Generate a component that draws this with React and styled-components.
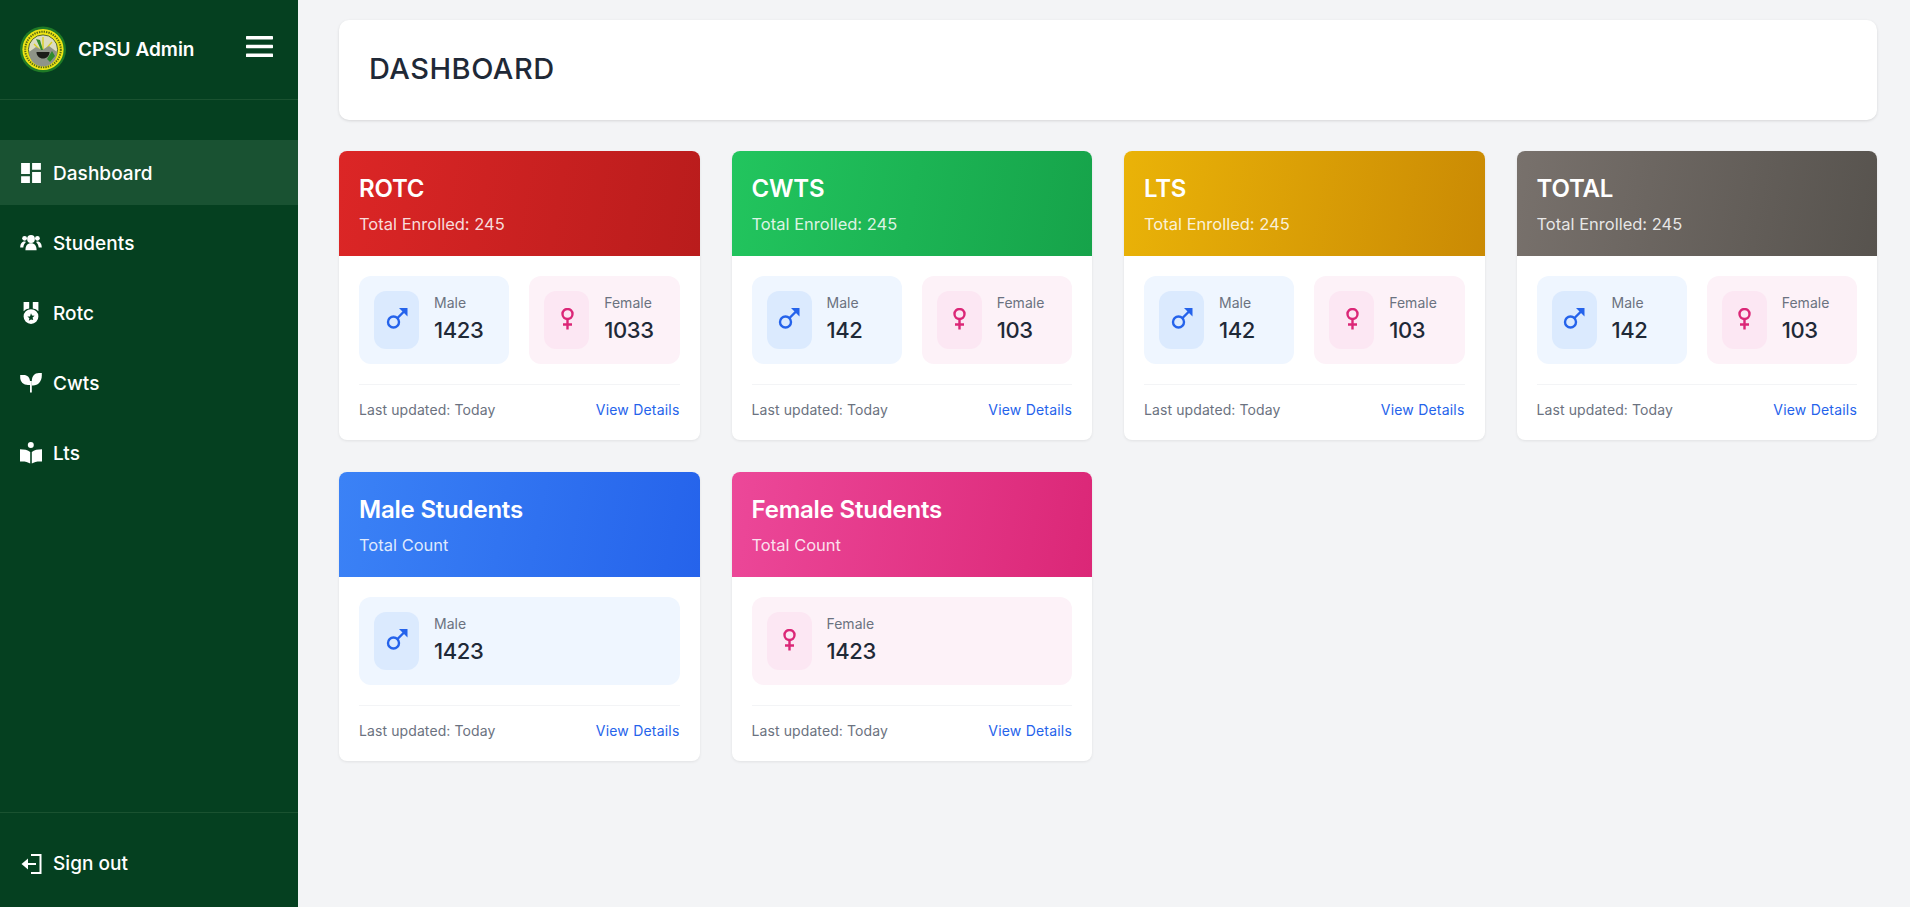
import React from 'react';
import styled, { createGlobalStyle } from 'styled-components';

const Global = createGlobalStyle`
  html, body { margin: 0; padding: 0; height: 100%; }
  body { background: #f3f4f6; font-family: Inter, "Open Sans", sans-serif; }
  * { box-sizing: border-box; }
`;

const Shell = styled.div`
  display: flex;
  height: 907px;
  overflow: hidden;
`;

const Sidebar = styled.aside`
  width: 298px;
  flex: none;
  display: flex;
  flex-direction: column;
  background: #054020;
  color: #fff;
`;

const Brand = styled.div`
  height: 100px;
  border-bottom: 1px solid #1a5230;
  display: flex;
  align-items: center;
  padding: 0 25px 0 20px;
`;

const BrandName = styled.span`
  font-size: 19px;
  font-weight: 600;
  margin-left: 12px;
  flex: 1;
`;

const Nav = styled.nav`
  flex: 1;
  padding-top: 40px;
  display: flex;
  flex-direction: column;
  gap: 5px;
`;

const NavItem = styled.div`
  height: 65px;
  display: flex;
  align-items: center;
  gap: 11px;
  padding: 1px 20px 0;
  font-size: 19px;
  font-weight: 500;
  letter-spacing: 0.05px;
  background: ${p => (p.$active ? '#195232' : 'transparent')};
  svg { width: 22px; height: 22px; flex: none; }
`;

const Foot = styled.div`
  height: 95px;
  border-top: 1px solid #1a5230;
  padding-top: 6px;
  display: flex;
  align-items: center;
`;

const Main = styled.main`
  flex: 1;
  padding: 20px 33px 0 41px;
  min-width: 0;
`;

const TitleBar = styled.header`
  height: 100px;
  background: #fff;
  border-radius: 10px;
  box-shadow: 0 1px 3px rgba(0,0,0,.12);
  padding: 0 30px 3px;
  display: flex;
  align-items: center;
`;

const Title = styled.h1`
  margin: 0;
  font-size: 29px;
  font-weight: 500;
  letter-spacing: 0.5px;
  color: #1f2937;
`;

const Grid = styled.section`
  margin-top: 31px;
  display: grid;
  grid-template-columns: repeat(4, 1fr);
  gap: 32px;
`;

const Card = styled.article`
  background: #fff;
  border-radius: 8px;
  overflow: hidden;
  box-shadow: 0 1px 3px rgba(0,0,0,.08);
`;

const CardHead = styled.div`
  height: 105px;
  padding: 22px 20px 0;
  color: #fff;
  background: linear-gradient(100deg, ${p => p.$from}, ${p => p.$to});
`;

const CardTitle = styled.h2`
  margin: 0;
  font-size: 24px;
  line-height: 32px;
  font-weight: 600;
  letter-spacing: -0.2px;
`;

const CardSub = styled.p`
  margin: 7px 0 0;
  font-size: 16.5px;
  line-height: 24px;
  color: rgba(255,255,255,.85);
`;

const CardBody = styled.div`
  padding: 20px;
`;

const Stats = styled.div`
  display: flex;
  gap: 20px;
`;

const Stat = styled.div`
  flex: 1;
  height: 88px;
  border-radius: 12px;
  padding: 15px;
  display: flex;
  gap: 15px;
  background: ${p => (p.$female ? '#fdf2f8' : '#eff6ff')};
`;

const StatIcon = styled.div`
  width: 45px;
  height: 58px;
  border-radius: 12px;
  display: flex;
  align-items: center;
  justify-content: center;
  background: ${p => (p.$female ? '#fce7f3' : '#dbeafe')};
  color: ${p => (p.$female ? '#db2777' : '#2563eb')};
  svg { width: 24px; height: 24px; }
`;

const StatText = styled.div`
  display: flex;
  flex-direction: column;
`;

const StatLabel = styled.span`
  font-size: 14px;
  line-height: 20px;
  color: #6b7280;
  margin-top: 2px;
`;

const StatValue = styled.span`
  font-size: 22px;
  line-height: 34px;
  font-weight: 500;
  letter-spacing: -0.4px;
  color: #1f2937;
`;

const CardFoot = styled.div`
  margin-top: 20px;
  border-top: 1px solid #f3f4f6;
  padding-top: 15px;
  height: 36px;
  display: flex;
  justify-content: space-between;
  font-size: 14px;
  line-height: 20px;
  letter-spacing: 0.1px;
`;

const Updated = styled.span` color: #6b7280; `;
const Details = styled.a`
  color: #2563eb;
  letter-spacing: 0.2px;
`;

const MenuButton = styled.svg`
  margin-bottom: 6px;
  flex: none;
`;

const Logo = () => (
  <svg width="46" height="49" viewBox="0 0 46 49" style={{ flex: 'none' }}>
    <circle cx="23" cy="24.5" r="23" fill="#1f7a26" />
    <circle cx="23" cy="24.5" r="20.6" fill="#eee515" />
    <circle cx="23" cy="24.5" r="17.8" fill="none" stroke="#5a6a14" strokeWidth="2" strokeDasharray="1.4 1" />
    <circle cx="23" cy="24.5" r="14.6" fill="#dcdcc0" stroke="#2f4a12" strokeWidth="0.8" />
    <path d="M14 19l7 7M23 12v13M32 17l-7 8" stroke="#d8d020" strokeWidth="1.4" />
    <path d="M9 27l7-5 6 3 7-4 8 6a14 14 0 0 1-28 1Z" fill="#8f9488" />
    <path d="M16.5 27h13c0 4-3 6.5-6.5 6.5s-6.5-2.5-6.5-6.5Z" fill="#1c1c18" />
    <path d="M21 25l-5-11 4 1 3 10Z" fill="#2f8a2f" />
    <path d="M27 34l5-8 3 5-5 6Z" fill="#2f8a2f" />
  </svg>
);

const MenuIcon = () => (
  <MenuButton width="27" height="21" viewBox="0 0 27 21" fill="#fff">
    <rect y="0" width="27" height="3.4" rx="0.6" />
    <rect y="8.8" width="27" height="3.4" rx="0.6" />
    <rect y="17.6" width="27" height="3.4" rx="0.6" />
  </MenuButton>
);

const DashboardIcon = () => (
  <svg viewBox="2 2 20 20" fill="#fff">
    <path d="M3 13h8V3H3v10zm0 8h8v-6H3v6zm10 0h8V11h-8v10zm0-18v6h8V3h-8z" />
  </svg>
);

const StudentsIcon = () => (
  <svg viewBox="0 0 22 22" fill="#fff">
    <circle cx="11" cy="7" r="3.9" />
    <path d="M5.4 18.2c0-4.6 2-7 5.6-7s5.6 2.4 5.6 7Z" />
    <circle cx="4.6" cy="6.3" r="2.4" />
    <circle cx="17.4" cy="6.3" r="2.4" />
    <path d="M.2 15.6c0-3.6 1.6-6 4.2-6 .5 0 1 .1 1.5.3-1.6 1.4-2.4 3.2-2.6 5.7Z" />
    <path d="M21.8 15.6c0-3.6-1.6-6-4.2-6-.5 0-1 .1-1.5.3 1.6 1.4 2.4 3.2 2.6 5.7Z" />
  </svg>
);

const MedalIcon = () => (
  <svg viewBox="0 0 22 22" fill="#fff">
    <path d="M3.6 0h5.6v6.6a8 8 0 0 0-5.6 2.6ZM12.8 0h5.6v9.2a8 8 0 0 0-5.6-2.6Z" />
    <path fillRule="evenodd" d="M11 7.2a7.4 7.4 0 1 1 0 14.8 7.4 7.4 0 0 1 0-14.8Zm0 4 1 2.4 2.6.2-2 1.7.6 2.5L11 17.4l-2.2 1.4.6-2.5-2-1.7 2.6-.2Z" />
  </svg>
);

const SeedlingIcon = () => (
  <svg viewBox="0 0 22 22" fill="#fff">
    <path d="M.2 3H3.5C7.5 3 10 5.7 10 9.5V13H8C3.5 13 .2 10 .2 5.5Z" />
    <path d="M21.8 1V3.5C21.8 9.5 18 13.5 13 13.5H11.8V9C11.8 4.5 14.5 1 19 1Z" />
    <rect x="10" y="9" width="1.8" height="11.5" />
  </svg>
);

const BookIcon = () => (
  <svg viewBox="0 0 22 22" fill="#fff">
    <circle cx="10.8" cy="3" r="3" />
    <path d="M0 7.2c4 0 8 .6 10.2 2.8v11.6C7.5 19.6 4 19.2 0 19.5Z" />
    <path d="M22 7.2c-4 0-8 .6-10.2 2.8v11.6c2.7-2 6.2-2.4 10.2-2.1Z" />
  </svg>
);

const SignOutIcon = () => (
  <svg viewBox="0 0 22 22" fill="none" stroke="#fff" strokeWidth="2">
    <path d="M11 2h9.5v18H11" />
    <path d="M7 11h9" />
    <path d="M1.5 11l6.5-5.4v10.8Z" fill="#fff" stroke="none" />
  </svg>
);

const MaleIcon = () => (
  <svg viewBox="0 0 24 24" fill="none" stroke="currentColor" strokeWidth="2.4">
    <circle cx="8.5" cy="14" r="5.5" />
    <path d="M12.5 10L19 3.5" />
    <path d="M14 0h8.5v8.5Z" fill="currentColor" stroke="none" />
  </svg>
);

const FemaleIcon = () => (
  <svg viewBox="0 0 24 24" fill="none" stroke="currentColor" strokeWidth="2.4">
    <circle cx="12.5" cy="6" r="5" />
    <path d="M12.5 11.5V21.5M8 16.5h9" />
  </svg>
);

const nav = [
  ['Dashboard', <DashboardIcon />, true],
  ['Students', <StudentsIcon />],
  ['Rotc', <MedalIcon />],
  ['Cwts', <SeedlingIcon />],
  ['Lts', <BookIcon />],
];

const programs = [
  { title: 'ROTC', sub: 'Total Enrolled: 245', from: '#dc2626', to: '#b91c1c', male: 1423, female: 1033 },
  { title: 'CWTS', sub: 'Total Enrolled: 245', from: '#22c55e', to: '#16a34a', male: 142, female: 103 },
  { title: 'LTS', sub: 'Total Enrolled: 245', from: '#eab308', to: '#ca8a04', male: 142, female: 103 },
  { title: 'TOTAL', sub: 'Total Enrolled: 245', from: '#78716c', to: '#57534e', male: 142, female: 103 },
  { title: 'Male Students', sub: 'Total Count', from: '#3b82f6', to: '#2563eb', male: 1423 },
  { title: 'Female Students', sub: 'Total Count', from: '#ec4899', to: '#db2777', female: 1423 },
];

const StatBox = ({ female, value }) => (
  <Stat $female={female}>
    <StatIcon $female={female}>{female ? <FemaleIcon /> : <MaleIcon />}</StatIcon>
    <StatText>
      <StatLabel>{female ? 'Female' : 'Male'}</StatLabel>
      <StatValue>{value}</StatValue>
    </StatText>
  </Stat>
);

export default function App() {
  return (
    <Shell>
      <Global />
      <Sidebar>
        <Brand>
          <Logo />
          <BrandName>CPSU Admin</BrandName>
          <MenuIcon />
        </Brand>
        <Nav>
          {nav.map(([label, icon, active]) => (
            <NavItem key={label} $active={active}>{icon}{label}</NavItem>
          ))}
        </Nav>
        <Foot>
          <NavItem><SignOutIcon />Sign out</NavItem>
        </Foot>
      </Sidebar>
      <Main>
        <TitleBar><Title>DASHBOARD</Title></TitleBar>
        <Grid>
          {programs.map(p => (
            <Card key={p.title}>
              <CardHead $from={p.from} $to={p.to}>
                <CardTitle>{p.title}</CardTitle>
                <CardSub>{p.sub}</CardSub>
              </CardHead>
              <CardBody>
                <Stats>
                  {p.male !== undefined && <StatBox value={p.male} />}
                  {p.female !== undefined && <StatBox female value={p.female} />}
                </Stats>
                <CardFoot>
                  <Updated>Last updated: Today</Updated>
                  <Details>View Details</Details>
                </CardFoot>
              </CardBody>
            </Card>
          ))}
        </Grid>
      </Main>
    </Shell>
  );
}
